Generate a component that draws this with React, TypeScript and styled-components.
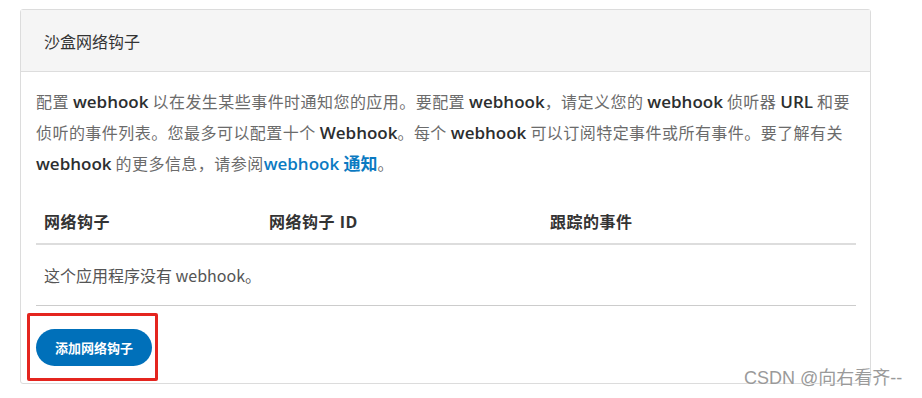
import styled, { createGlobalStyle } from "styled-components";

const GlobalStyle = createGlobalStyle`
  html, body {
    margin: 0;
    padding: 0;
    background: #fff;
  }
  body {
    font-family: "Noto Sans", "Noto Sans CJK SC", sans-serif;
    -webkit-font-smoothing: antialiased;
  }
`;

const Page = styled.div`
  position: relative;
  width: 922px;
  height: 398px;
  box-sizing: border-box;
  padding: 9px 0 0 20px;
`;

const Card = styled.section`
  width: 851px;
  box-sizing: border-box;
  border: 1px solid #dcdcdc;
  border-radius: 3px;
  background: #fff;
`;

const CardHeader = styled.header`
  height: 61px;
  display: flex;
  align-items: center;
  padding: 0 23px;
  background: #f5f5f5;
  border-bottom: 1px solid #ddd;
  font-size: 16px;
  color: #333;
`;

const CardBody = styled.div`
  padding: 14px 14px 17px 15px;
`;

const Intro = styled.p`
  margin: 0 0 19px;
  font-size: 16px;
  line-height: 30px;
  letter-spacing: 0.45px;
  color: #6b6b6b;
  font-family: "Noto Sans CJK SC", sans-serif;
  white-space: nowrap;

  b {
    font-family: "Open Sans", "Noto Sans", sans-serif;
    font-size: 17px;
    font-weight: 600;
    letter-spacing: 0;
    color: #2c2e2f;
  }
`;

const Link = styled.a`
  color: #0b7ac2;
  text-decoration: none;
  font-family: "Open Sans", "Noto Sans CJK SC", sans-serif;
  font-size: 17px;
  font-weight: 600;
  letter-spacing: 0;
`;

const Table = styled.table`
  width: 100%;
  border-collapse: collapse;
  table-layout: fixed;
`;

const Th = styled.th<{ $width?: number }>`
  width: ${(p) => (p.$width ? `${p.$width}px` : "auto")};
  text-align: left;
  padding: 13px 8px 10px;
  line-height: 22px;
  font-size: 16px;
  font-weight: 700;
  letter-spacing: 0.5px;
  color: #333;
  border-bottom: 2px solid #ddd;
  font-family: "Open Sans", "Noto Sans CJK SC", sans-serif;
`;

const Td = styled.td`
  padding: 19px 8px;
  line-height: 22px;
  font-size: 16px;
  color: #555;
  border-bottom: 1px solid #ccc;
  font-family: "Noto Sans CJK SC", sans-serif;
`;

const Actions = styled.div`
  padding-top: 23px;
  display: flex;
`;

const ButtonWrap = styled.div`
  position: relative;
  display: inline-flex;
`;

const Highlight = styled.span`
  position: absolute;
  top: -16px;
  bottom: -15px;
  left: -9px;
  right: -6px;
  border: 3px solid #e4251f;
  border-radius: 2px;
  pointer-events: none;
`;

const PrimaryButton = styled.button`
  height: 37px;
  width: 116px;
  border: none;
  border-radius: 19px;
  background: #0070ba;
  color: #fff;
  font-size: 13px;
  font-weight: 700;
  font-family: "Noto Sans CJK SC", sans-serif;
  padding: 0;
  cursor: pointer;
`;

const Watermark = styled.span`
  position: absolute;
  left: 744px;
  top: 366px;
  font-size: 18px;
  line-height: 24px;
  color: #9a9a9a;
  font-family: "Liberation Sans", "Noto Sans CJK SC", sans-serif;
  text-shadow: 0 0 2px #fff;
`;

export default function App() {
  return (
    <>
      <GlobalStyle />
      <Page>
        <Card>
          <CardHeader>沙盒网络钩子</CardHeader>
          <CardBody>
            <Intro>
              配置 <b>webhook</b> 以在发生某些事件时通知您的应用。要配置 <b>webhook</b>，请定义您的 <b>webhook</b> 侦听器 <b>URL</b> 和要
              <br />
              侦听的事件列表。您最多可以配置十个 <b>Webhook</b>。每个 <b>webhook</b> 可以订阅特定事件或所有事件。要了解有关
              <br />
              <b>webhook</b> 的更多信息，请参阅<Link href="#">webhook 通知</Link>。
            </Intro>
            <Table>
              <thead>
                <tr>
                  <Th $width={209}>网络钩子</Th>
                  <Th $width={265}>网络钩子 ID</Th>
                  <Th>跟踪的事件</Th>
                </tr>
              </thead>
              <tbody>
                <tr>
                  <Td colSpan={3}>这个应用程序没有 webhook。</Td>
                </tr>
              </tbody>
            </Table>
            <Actions>
              <ButtonWrap>
                <PrimaryButton>添加网络钩子</PrimaryButton>
                <Highlight />
              </ButtonWrap>
            </Actions>
          </CardBody>
        </Card>
        <Watermark>CSDN @向右看齐--</Watermark>
      </Page>
    </>
  );
}
